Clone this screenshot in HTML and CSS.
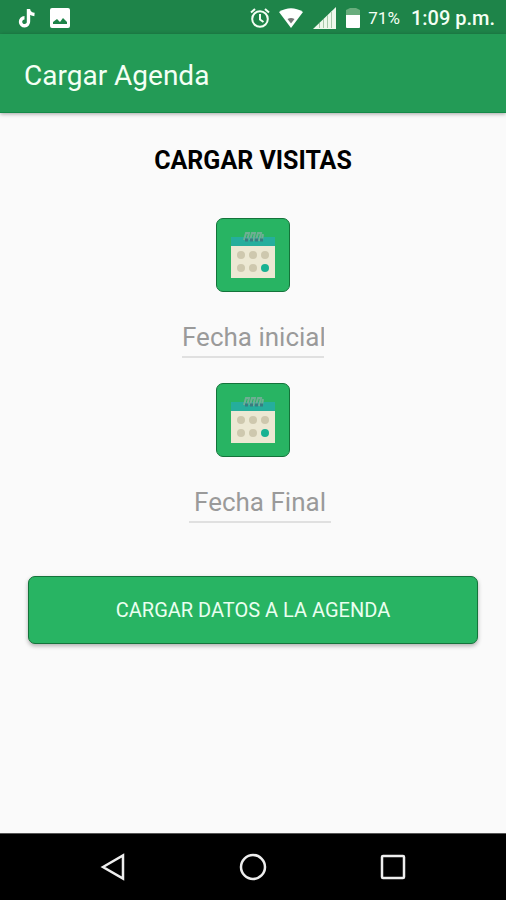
FILE: index.html
```html
<!DOCTYPE html>
<html lang="es">

<head>
    <meta charset="UTF-8">
    <meta name="viewport" content="width=device-width, initial-scale=1.0">
    <title>Cargar Agenda</title>
    <link rel="stylesheet" href="styles.css">
</head>

<body>
    <div class="status-bar">
        <div class="status-group notifications">
            <svg width="18" height="20" viewBox="0 0 18 20">
                <path d="M10.500 1V13.500A4 4 0 1 1 6.500 9.800M10.500 1.500C11 4.500 13 6.200 16.500 6.500" fill="none" stroke="#fff" stroke-width="3.400"/>
            </svg>
            <svg width="20" height="20" viewBox="0 0 20 20">
                <path fill="#fff" fill-rule="evenodd" d="M2 0H18Q20 0 20 2V18Q20 20 18 20H2Q0 20 0 18V2Q0 0 2 0ZM3 16H17V14L13 10L10 14L7 11L3 14Z"/>
            </svg>
        </div>
        <div class="status-group">
            <svg width="20" height="20" viewBox="0 0 20 20" fill="none" stroke="#f4fff4" stroke-width="2">
                <circle cx="10" cy="11" r="7.800"/>
                <path d="M10 6V11.500L13.500 14M1 4.500L5 1M19 4.500L15 1"/>
            </svg>
            <svg class="wifi" width="24" height="20" viewBox="0 0 24 20">
                <path fill="#fff" d="M0 4Q12-3.500 24 4L12 20Z"/>
                <path fill="#777" d="M8.500 11Q12 9.200 15.500 11L12 15.500Z"/>
            </svg>
            <svg class="signal" width="23" height="22" viewBox="0 0 23 22">
                <path fill="#eef8ec" d="M0 22L23 0V22Z"/>
                <path stroke="#a9c9aa" d="M6.500 16V21M10.500 12V21M14.500 8V21M18.500 5V21"/>
            </svg>
            <svg class="battery" width="14" height="20" viewBox="0 0 14 20">
                <path fill="#69ad7d" d="M4 0H10L14 2V7H0V2Z"/>
                <path fill="#fff" d="M0 7H14V19Q14 20 13 20H1Q0 20 0 19Z"/>
            </svg>
            <span class="percent">71%</span>
            <span class="clock">1:09 p.m.</span>
        </div>
    </div>

    <header class="app-bar">
        <h1>Cargar Agenda</h1>
    </header>

    <main>
        <h2>CARGAR VISITAS</h2>
        <form class="visits">
            <div class="field">
                <button class="date-button" type="button" aria-label="Elegir fecha inicial">
                    <svg width="44" height="47" viewBox="0 0 44 47">
                        <path fill="#ece8d3" d="M0 14H44V46H0Z"/>
                        <path fill="#25ae9c" d="M0 5H44V14H0Z"/>
                        <path d="M13 8L15 1H18L16 9M19 8L21 1H24L22 9M25 8L27 1H30L28 9M31 8L32 2" fill="none" stroke="#6fae93" stroke-width="2"/>
                        <path d="M14 8H32" stroke="#397b80" stroke-width="3" stroke-dasharray="3 2"/>
                        <g fill="#cec8ae">
                            <circle cx="10" cy="23" r="4"/>
                            <circle cx="22" cy="23" r="4"/>
                            <circle cx="34" cy="23" r="4"/>
                            <circle cx="10" cy="36" r="4"/>
                            <circle cx="22" cy="36" r="4"/>
                        </g>
                        <circle cx="34" cy="36" r="4" fill="#18b292"/>
                    </svg>
                </button>
                <input class="date-input" type="text" placeholder="Fecha inicial" aria-label="Fecha inicial">
            </div>
            <div class="field">
                <button class="date-button" type="button" aria-label="Elegir fecha final">
                    <svg width="44" height="47" viewBox="0 0 44 47">
                        <path fill="#ece8d3" d="M0 14H44V46H0Z"/>
                        <path fill="#25ae9c" d="M0 5H44V14H0Z"/>
                        <path d="M13 8L15 1H18L16 9M19 8L21 1H24L22 9M25 8L27 1H30L28 9M31 8L32 2" fill="none" stroke="#6fae93" stroke-width="2"/>
                        <path d="M14 8H32" stroke="#397b80" stroke-width="3" stroke-dasharray="3 2"/>
                        <g fill="#cec8ae">
                            <circle cx="10" cy="23" r="4"/>
                            <circle cx="22" cy="23" r="4"/>
                            <circle cx="34" cy="23" r="4"/>
                            <circle cx="10" cy="36" r="4"/>
                            <circle cx="22" cy="36" r="4"/>
                        </g>
                        <circle cx="34" cy="36" r="4" fill="#18b292"/>
                    </svg>
                </button>
                <div class="end-date">
                    <input class="date-input" type="text" placeholder="Fecha Final" aria-label="Fecha Final">
                </div>
            </div>
            <button class="submit" type="submit">CARGAR DATOS A LA AGENDA</button>
        </form>
    </main>

    <nav class="nav-bar">
        <button type="button" aria-label="Atrás">
            <svg width="28" height="28" viewBox="0 0 28 28">
                <path d="M4 14L24 2.500V25.500Z"/>
            </svg>
        </button>
        <button type="button" aria-label="Inicio">
            <svg width="28" height="28" viewBox="0 0 28 28">
                <circle cx="14" cy="14" r="12"/>
            </svg>
        </button>
        <button type="button" aria-label="Recientes">
            <svg width="28" height="28" viewBox="0 0 28 28">
                <rect x="3" y="3" width="22" height="22" rx="1"/>
            </svg>
        </button>
    </nav>
</body>

</html>
```

FILE: styles.css
```css
* {
    box-sizing: border-box;
    margin: 0;
    padding: 0;
    font-family: Roboto, sans-serif;
}

body {
    display: flex;
    flex-direction: column;
    min-height: 100vh;
    background: #fafafa;
}

svg {
    display: block;
}

.status-bar {
    display: flex;
    justify-content: space-between;
    height: 34px;
    padding: 2px 11px 0 18px;
    background: #1e8449;
    color: #f4fff4;
}

.status-group {
    display: flex;
    align-items: center;
}

.notifications {
    gap: 14px;
}

.wifi {
    margin-left: 9px;
}

.signal,
.battery {
    margin-left: 10px;
}

.percent {
    margin-left: 8px;
    font-size: 17px;
}

.clock {
    margin-left: 11px;
    font-size: 20px;
    font-weight: 500;
}

.app-bar {
    display: flex;
    align-items: center;
    height: 79px;
    padding: 4px 24px 0;
    background: #239b56;
    border-bottom: 1px solid #148a48;
    box-shadow: 0 1px 4px rgba(0, 0, 0, 0.35);
    color: #f4fff4;
}

h1 {
    font-size: 28px;
    font-weight: 400;
}

main {
    flex: 1;
    padding: 33px 28px;
}

h2 {
    font-size: 25px;
    font-weight: 700;
    line-height: 30px;
    text-align: center;
}

.visits {
    display: flex;
    flex-direction: column;
    gap: 25px;
    margin-top: 42px;
}

.field {
    display: flex;
    flex-direction: column;
    align-items: center;
    gap: 26px;
}

.date-button {
    display: flex;
    align-items: center;
    justify-content: center;
    width: 74px;
    height: 74px;
    background: #28b463;
    border: 1px solid #14733a;
    border-radius: 7px;
}

.date-input {
    width: 142px;
    height: 40px;
    background: transparent;
    border: 0;
    border-bottom: 2px solid #e0e0e0;
    border-radius: 0;
    font-size: 26px;
    text-align: center;
    color: #333;
    outline: none;
}

.date-input::placeholder {
    color: #9a9a9a;
}

.end-date {
    padding-left: 14px;
}

.submit {
    height: 68px;
    margin-top: 28px;
    background: #28b463;
    border: 1px solid #14733a;
    border-radius: 7px;
    box-shadow: 0 2px 4px rgba(0, 0, 0, 0.3);
    font-size: 20px;
    color: #eafff0;
}

.nav-bar {
    display: flex;
    justify-content: center;
    gap: 112px;
    height: 67px;
    background: #000;
    border-top: 1px solid #555;
}

.nav-bar button {
    background: none;
    border: 0;
}

.nav-bar svg {
    fill: none;
    stroke: #eee;
    stroke-width: 2.5;
}
```
